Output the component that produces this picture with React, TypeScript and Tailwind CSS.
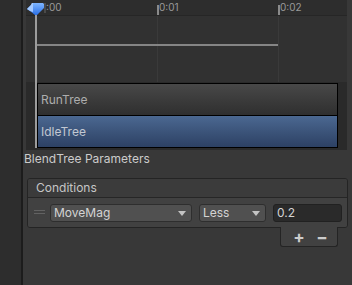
import React from "react";

function Caret() {
  return (
    <svg width="8" height="5" viewBox="0 0 8 5" className="shrink-0">
      <path d="M0 0 L8 0 L4 5 Z" fill="#c4c4c4" />
    </svg>
  );
}

export default function App() {
  return (
    <div
      className="w-[352px] h-[285px] flex bg-[#383838] overflow-hidden"
      style={{ fontFamily: "Inter, 'Liberation Sans', sans-serif" }}
    >
      <div className="w-[21px] bg-[#2d2d2d]" />
      <div className="w-[2px] bg-[#1c1c1c]" />
      <div className="flex-1 flex flex-col">
        {/* Timeline */}
        <div className="ml-[3px] w-[321px] relative flex flex-col">
          <div className="h-[15px] bg-[#2d2d2d] border-b border-[#262626] relative box-content">
            <span className="absolute left-[20px] top-[1px] text-[10px] leading-[13px] text-[#9a9a9a]">:00</span>
            <span className="absolute left-[133px] top-[1px] text-[10px] leading-[13px] text-[#9a9a9a]">0:01</span>
            <span className="absolute left-[254px] top-[1px] text-[10px] leading-[13px] text-[#9a9a9a]">0:02</span>
            <div className="absolute left-[131px] top-[5px] w-[2px] h-[10px] bg-[#8a8a8a]" />
            <div className="absolute left-[252px] top-[5px] w-[2px] h-[10px] bg-[#8a8a8a]" />
          </div>
          <div className="h-[66px] bg-[#313131] relative">
            <div className="absolute left-[131px] top-0 w-[1px] h-full bg-[#3a3a3a]" />
            <div className="absolute left-[252px] top-0 w-[1px] h-full bg-[#3a3a3a]" />
            <div className="absolute left-[10px] top-[28px] w-[242px] h-[2px] bg-[#858585]" />
          </div>
          <div className="bg-[#2a2a2a] pt-[1px] pb-[2px] pl-[11px] pr-[9px]">
            <div className="border border-black flex flex-col">
              <div className="h-[31px] flex items-center pl-[3px] bg-gradient-to-b from-[#484848] to-[#2f2f2f] border-b border-black box-content">
                <span className="text-[12px] text-[#adadad]">RunTree</span>
              </div>
              <div className="h-[31px] flex items-center pl-[3px] bg-gradient-to-b from-[#4b6891] to-[#2d4164]">
                <span className="text-[12px] text-[#c2c8d2]">IdleTree</span>
              </div>
            </div>
          </div>
          {/* playhead */}
          <div className="absolute left-[9px] top-[12px] w-[2px] h-[136px] bg-[#9c9c9c]" />
          <svg className="absolute left-[1px] top-[2px]" width="19" height="14" viewBox="0 0 19 14">
            <defs>
              <linearGradient id="mk" x1="0" y1="0" x2="0" y2="1">
                <stop offset="0" stopColor="#7fb6ff" />
                <stop offset="1" stopColor="#2a6fe6" />
              </linearGradient>
            </defs>
            <path d="M0 7 L4 3 L5 1 L16 1 L17 2 L17 6 L10 13 L8 13 L3 9 Z" fill="url(#mk)" />
            <path d="M0 7 L4 3 L5 1 L6 1 L6 10 L3 9 Z" fill="#a4caff" />
            <rect x="17" y="1" width="2" height="10" fill="#4a4a4a" />
          </svg>
        </div>

        {/* BlendTree Parameters */}
        <div className="h-[18px] leading-[18px] pl-[1px] text-[12px] text-[#cbcbcb]">BlendTree Parameters</div>

        {/* Conditions */}
        <div className="mt-[10px] ml-[4px] w-[321px] flex flex-col">
          <div className="rounded-[3px] border border-[#242424] overflow-hidden">
            <div className="h-[18px] bg-[#3b3b3b] border-b border-[#262626] pl-[8px] flex items-center box-content">
              <span className="text-[12px] text-[#c6c6c6]">Conditions</span>
            </div>
            <div className="h-[29px] bg-[#414141] flex items-start pt-[6px] box-border">
              <div className="w-[22px] flex flex-col items-center gap-[2px] pt-[6px]">
                <div className="w-[11px] h-[1px] bg-[#626262]" />
                <div className="w-[11px] h-[1px] bg-[#626262]" />
              </div>
              <div className="w-[142px] h-[18px] rounded-[3px] bg-[#505050] border border-[#2e2e2e] flex items-center justify-between pl-[3px] pr-[5px]">
                <span className="text-[12px] text-[#d4d4d4]">MoveMag</span>
                <Caret />
              </div>
              <div className="ml-[7px] w-[67px] h-[18px] rounded-[3px] bg-[#505050] border border-[#2e2e2e] flex items-center justify-between pl-[3px] pr-[5px]">
                <span className="text-[12px] text-[#d4d4d4]">Less</span>
                <Caret />
              </div>
              <div className="ml-[7px] w-[69px] h-[18px] rounded-[3px] bg-[#2a2a2a] border border-[#212121] flex items-center pl-[3px]">
                <span className="text-[12px] text-[#d4d4d4]">0.2</span>
              </div>
            </div>
          </div>
          <div className="self-end mr-[10px] -mt-[1px] w-[58px] h-[20px] bg-[#414141] border border-t-0 border-[#242424] rounded-b-[3px] flex items-center pl-[12px] gap-[11px]">
            <span className="w-[12px] text-center text-[17px] leading-[16px] font-bold text-[#cccccc]">+</span>
            <span className="w-[12px] text-center text-[17px] leading-[16px] font-bold text-[#cccccc]">−</span>
          </div>
        </div>
      </div>
    </div>
  );
}
